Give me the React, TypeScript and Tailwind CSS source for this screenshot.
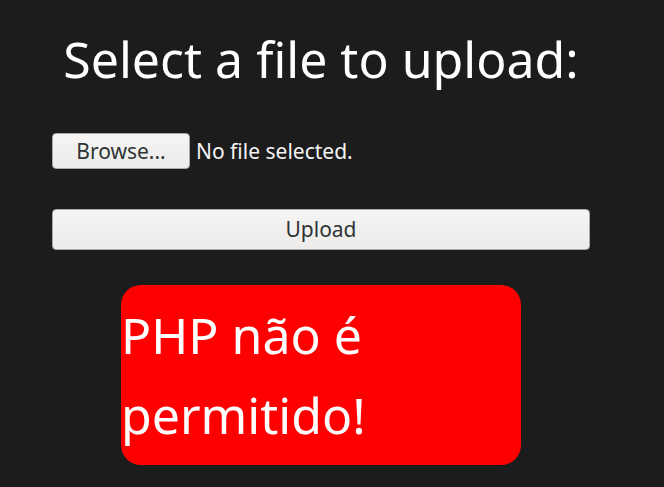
import React from "react";

export default function App() {
  return (
    <div className="min-h-[487px] w-full bg-[#1c1c1c] text-white" style={{ fontFamily: '"Noto Sans", "Open Sans", sans-serif' }}>
      <div className="ml-[52px] w-[538px] pt-[27px] flex flex-col">
        <h1 className="text-center text-[50px] leading-[64px] font-normal">Select a file to upload:</h1>
        <div className="mt-[42px] flex items-center h-[36px]">
          <button className="h-[36px] w-[138px] rounded-[4px] border border-[#a9a9a9] bg-gradient-to-b from-[#f6f5f4] to-[#edebe9] text-[#2e3436] text-[21px] leading-none">
            Browse...
          </button>
          <span className="ml-[6px] text-[21px] leading-none text-[#f4f4f4]">No file selected.</span>
        </div>
        <button className="mt-[40px] h-[41px] w-[538px] rounded-[4px] border border-[#a9a9a9] bg-gradient-to-b from-[#f6f5f4] to-[#edebe9] text-[#2e3436] text-[21px] leading-none">
          Upload
        </button>
        <div className="mt-[35px] ml-[69px] w-[400px] h-[180px] rounded-[20px] bg-[#ff0000] text-[50px] leading-[80px] text-white pt-[10px]">
          <div>PHP não é</div>
          <div>permitido!</div>
        </div>
      </div>
    </div>
  );
}
